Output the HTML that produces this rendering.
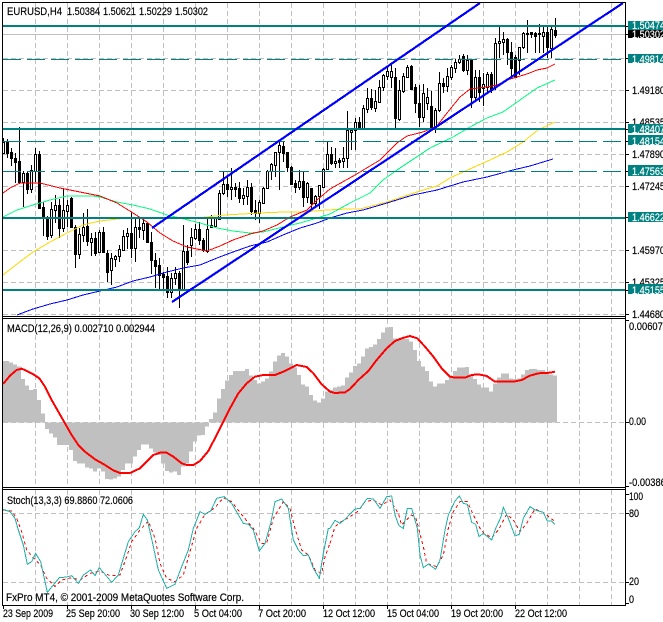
<!DOCTYPE html>
<html><head><meta charset="utf-8"><title>EURUSD,H4</title>
<style>
html,body{margin:0;padding:0;background:#fff;overflow:hidden}
svg{display:block}
text{font-family:"Liberation Sans",sans-serif;font-size:11px;fill:#000;stroke:#000;stroke-width:.18px}
text.w{fill:#fff;stroke:#fff}
</style></head><body>
<svg width="663" height="622" viewBox="0 0 663 622" xmlns="http://www.w3.org/2000/svg" shape-rendering="crispEdges">
<rect width="663" height="622" fill="#fff"/>
<!-- grid -->
<g fill="none" stroke="#c0c0c0" stroke-width="1" stroke-dasharray="5 3">
<path d="M35.5 3V316M67.5 3V316M99.5 3V316M131.5 3V316M163.5 3V316M195.5 3V316M227.5 3V316M259.5 3V316M291.5 3V316M323.5 3V316M355.5 3V316M387.5 3V316M419.5 3V316M451.5 3V316M483.5 3V316M515.5 3V316M547.5 3V316M579.5 3V316M611.5 3V316"/>
<path d="M3 58.5H625M3 90.5H625M3 122.5H625M3 154.5H625M3 186.5H625M3 250.5H625M3 282.5H625M3 314.5H625"/>
<path d="M35.5 319V487M67.5 319V487M99.5 319V487M131.5 319V487M163.5 319V487M195.5 319V487M227.5 319V487M259.5 319V487M291.5 319V487M323.5 319V487M355.5 319V487M387.5 319V487M419.5 319V487M451.5 319V487M483.5 319V487M515.5 319V487M547.5 319V487M579.5 319V487M611.5 319V487"/>
<path d="M35.5 490V605M67.5 490V605M99.5 490V605M131.5 490V605M163.5 490V605M195.5 490V605M227.5 490V605M259.5 490V605M291.5 490V605M323.5 490V605M355.5 490V605M387.5 490V605M419.5 490V605M451.5 490V605M483.5 490V605M515.5 490V605M547.5 490V605M579.5 490V605M611.5 490V605"/>
<path d="M3 513.5H625M3 582.5H625"/>
</g>
<path d="M3 34.5H625" stroke="#c0c0c0" stroke-width="1"/>
<!-- candles -->
<g transform="translate(.5 0)" fill="none">
<path stroke="#000" stroke-width="1" d="M3 138V154M7 139V158M11 148V166M15 153V183M19 127V184M23 171V207M27 171V194M31 165V193M35 148V182M39 151V208M43 202V236M47 216V240M51 202V238M55 195V223M59 199V238M63 188V232M67 200V227M71 197V228M75 225V268M79 228V259M83 213V242M87 209V246M91 233V256M95 232V256M99 230V253M103 227V253M107 250V282M111 253V285M115 255V267M119 245V262M123 230V251M127 228V249M131 212V258M135 217V262M139 218V238M143 218V240M147 222V242M151 232V274M155 253V288M159 258V291M163 272V290M167 267V298M171 273V298M175 267V285M179 271V308M183 225V290M187 245V265M191 228V257M195 224V240M199 222V245M203 238V252M207 217V253M211 215V227M215 217V226M219 190V219M223 172V195M227 175V197M231 168V200M235 183V197M239 182V203M243 188V205M247 180V205M251 183V215M255 200V220M259 200V223M263 187V203M267 170V188M271 163V180M275 152V177M279 140V190M283 142V162M287 152V172M291 166V185M295 180V193M299 170V190M303 172V207M307 182V203M311 188V209M315 195V207M319 185V209M323 168V188M327 142V170M331 147V165M335 148V168M339 158V168M343 147V168M347 111V168M351 128V150M355 118V150M359 117V130M363 105V130M367 88V113M371 89V110M375 90V112M379 80V103M383 74V91M387 67V80M391 65V88M395 68V128M399 80V121M403 73V93M407 65V78M411 65V89M415 84V113M419 85V127M423 84V122M427 88V110M431 91V128M435 108V133M439 72V112M443 78V93M447 68V92M451 65V80M455 59V73M459 55V64M463 54V72M467 55V75M471 59V108M475 70V100M479 70V102M483 73V106M487 72V93M491 72V93M495 38V90M499 26V58M503 32V55M507 38V65M511 42V78M515 55V78M519 47V75M523 32V49M527 20V53M531 32V38M535 32V53M539 24V53M543 27V53M547 25V58M551 27V58M555 18V38"/>
<path stroke="#000" stroke-width="3" d="M7 142V154M11 152V159M15 158V163M19 161V183M27 173V190M39 154V209M43 207V218M47 217V237M59 205V229M71 198V228M75 227V255M87 226V242M95 238V254M103 232V253M107 253V273M131 233V249M139 227V230M147 223V243M151 242V261M155 260V267M159 265V276M163 274V278M167 276V293M179 273V291M187 251V263M199 229V241M203 240V251M211 225V228M227 184V190M235 187V190M239 188V199M251 187V212M255 210V214M283 146V154M287 152V168M291 167V185M295 183V188M303 181V198M311 188V204M331 154V164M339 160V163M359 122V130M371 98V108M395 77V119M411 66V90M415 87V104M419 103V118M431 106V129M443 83V87M463 56V71M471 59V98M479 77V93M491 74V91M507 39V53M511 52V69M515 57V78M531 32V35M535 33V37M547 32V48M555 30V36M3 142V154M23 173V183M31 170V190M35 154V172M51 209V236M55 205V211M63 210V229M67 205V212M79 234V255M83 227V236M91 238V243M99 232V253M111 258V271M115 256V260M119 249V257M123 236V251M127 233V237M135 227V249M143 223V231M171 278V293M175 273V279M183 251V291M191 237V246M195 229V239M207 229V252M215 217V227M219 193V220M223 184V194M231 187V190M243 195V199M247 187V197M259 202V214M263 188V204M267 171V189M271 164V172M275 152V166M279 145V153M299 181V188M307 183V198M315 196V204M319 185V197M323 169V188M327 154V170M335 161V164M343 158V162M347 130V159M351 130V133M355 122V131M363 108V129M367 98V110M375 101V109M379 87V103M383 75V88M387 71V77M391 71V78M399 90V120M403 76V92M407 67V78M423 93V118M427 97V104M435 110V129M439 83V111M447 76V87M451 67V78M455 62V69M459 59V63M467 60V71M475 77V98M483 84V89M487 74V88M495 43V88M499 41V44M503 39V43M519 47V61M523 33V48M527 33V35M539 33V35M543 32V37M551 29V49"/>
<path stroke="#fff" stroke-width="1" d="M3 143V153M23 174V182M31 171V189M35 155V171M51 210V235M55 206V210M63 211V228M67 206V211M79 235V254M83 228V235M91 239V242M99 233V252M111 259V270M115 257V259M119 250V256M123 237V250M127 234V236M135 228V248M143 224V230M171 279V292M175 274V278M183 252V290M191 238V245M195 230V238M207 230V251M215 218V226M219 194V219M223 185V193M231 188V189M243 196V198M247 188V196M259 203V213M263 189V203M267 172V188M271 165V171M275 153V165M279 146V152M299 182V187M307 184V197M315 197V203M319 186V196M323 170V187M327 155V169M335 162V163M343 159V161M347 131V158M351 131V132M355 123V130M363 109V128M367 99V109M375 102V108M379 88V102M383 76V87M387 72V76M391 72V77M399 91V119M403 77V91M407 68V77M423 94V117M427 98V103M435 111V128M439 84V110M447 77V86M451 68V77M455 63V68M459 60V62M467 61V70M475 78V97M483 85V88M487 75V87M495 44V87M499 42V43M503 40V42M519 48V60M523 34V47M543 33V36M551 30V48"/>
</g>
<!-- moving averages -->
<g fill="none" stroke-width="1">
<polyline stroke="#ffd700" points="3,275 17,264 33,252 50,242 67,233 83,225 100,221 127,218 167,218 187,219 225,215 260,213 283,212 303,212 327,210 347,209 360,209 387,202 417,192 437,186 450,178 463,172 490,160 507,152 523,142 538,130 555,122"/>
<polyline stroke="#00ff7f" points="3,217 17,210 33,205 50,200 67,196 93,196 100,197 117,202 133,205 150,209 167,215 180,218 200,223 217,228 233,231 250,233 263,232 283,227 300,223 317,218 330,214 350,203 370,193 383,180 397,170 412,160 430,148 453,137 470,127 487,118 503,112 520,100 537,88 555,80"/>
<polyline stroke="#0000ff" points="17,315 33,309 50,304 67,300 83,295 100,291 117,287 133,281 150,277 167,272 183,268 200,265 217,258 233,252 250,246 267,242 283,235 300,228 317,223 330,218 347,213 363,210 387,203 413,195 437,190 463,182 487,177 513,170 530,166 553,159"/>
<polyline stroke="#ff0000" points="3,193 10,188 20,183 40,183 60,188 80,192 100,196 117,203 133,213 147,222 160,233 173,241 187,247 207,251 220,246 233,240 250,234 263,231 277,225 290,217 307,210 317,200 330,189 355,175 380,160 397,143 407,136 423,132 437,126 447,113 460,97 470,89 487,87 497,85 507,80 527,74 537,70 547,68 555,64"/>
</g>
<!-- teal levels -->
<g fill="none" stroke="#008080">
<path stroke-width="2" d="M3 26H625M3 129H625M3 218H625M3 290H625"/>
<path stroke-width="1" stroke-dasharray="18 6" d="M3 59.5H625M3 141.5H625M3 171.5H625"/>
</g>
<!-- trend lines -->
<path fill="none" stroke="#0000ff" stroke-width="2.2" d="M152 228L480 3M172 302L623 3"/>
<!-- MACD histogram -->
<g transform="translate(0 315) scale(1 .33333)">
<path fill="#c0c0c0" d="M3 322V138h2V138h4V142h4V148h4V155h4V192h4V212h4V225h4V222h4V255h4V295h4V342h4V355h4V368h4V390h4V390h4V390h4V405h4V438h4V445h4V445h4V457h4V460h4V470h4V460h4V470h4V492h4V494h4V490h4V485h4V465h4V445h4V445h4V425h4V405h4V388h4V388h4V400h4V412h4V420h4V445h4V468h4V472h4V470h4V480h4V455h4V445h4V410h4V380h4V362h4V360h4V335h4V312h4V292h4V250h4V222h4V197h4V180h4V168h4V168h4V168h4V162h4V182h4V195h4V205h4V200h4V190h4V170h4V140h4V122h4V114h4V125h4V145h4V158h4V180h4V208h4V215h4V240h4V256h4V262h4V250h4V230h4V225h4V218h4V215h4V212h4V188h4V172h4V153h4V145h4V124h4V100h4V96h4V88h4V72h4V52h4V38h4V36h4V70h4V72h4V72h4V72h4V80h4V105h4V138h4V155h4V168h4V200h4V215h4V205h4V205h4V195h4V185h4V168h4V158h4V158h4V156h4V180h4V192h4V208h4V218h4V218h4V230h4V205h4V188h4V175h4V175h4V190h4V192h4V190h4V178h4V165h4V162h4V162h4V165h4V165h4V172h4V178h4V182h4V322Z"/>
</g>
<path d="M3 422.5H625" stroke="#c0c0c0" stroke-width="1" stroke-dasharray="5 3" fill="none"/>
<!-- MACD signal -->
<g fill="none" stroke="#ff0000" stroke-width="6">
<polyline transform="translate(0 315) scale(.33333)" points="9,207 30,182 50,165 65,161 85,170 100,178 118,190 135,215 155,255 175,290 195,325 215,360 235,390 255,410 285,433 315,450 340,466 360,474 390,474 420,460 440,440 460,420 480,413 500,413 520,425 545,445 560,450 580,450 600,438 625,408 650,360 670,320 690,280 715,235 740,205 765,185 790,180 825,180 850,170 870,160 890,150 920,156 940,175 965,208 990,230"/>
<polyline transform="translate(330 315) scale(.33333)" points="0,230 15,234 45,232 60,222 85,195 115,168 140,135 170,100 195,78 215,70 240,63 262,70 285,95 310,125 335,160 360,185 375,188 405,188 425,180 445,178 470,183 495,200 520,200 550,200 575,195 600,182 625,175 660,173 675,170"/>
</g>
<!-- Stochastic -->
<g fill="none" stroke-width="3">
<g stroke="#ff0000" stroke-dasharray="9 9">
<polyline transform="translate(0 485) scale(.33333)" points="9,75 35,78 50,100 65,140 80,195 100,218 122,240 140,280 165,305 185,285 215,278 240,285 270,265 300,258 330,272 360,270 380,215 395,170 420,135 445,108 465,160 480,235 500,280 525,290 550,270 570,200 590,130 615,88 645,68 670,38 695,50 730,95 760,130 785,175 800,175 820,100 850,50 870,70 885,130 905,195 925,210 945,255 965,265 975,215 990,175"/>
<polyline transform="translate(330 485) scale(.33333)" points="0,175 15,125 30,112 60,95 85,78 105,50 130,45 155,60 180,45 205,85 215,120 245,90 258,100 280,185 290,235 320,245 340,210 355,130 370,80 390,50 412,50 430,90 450,130 462,145 485,158 505,135 530,88 550,105 570,140 590,115 615,72 640,82 675,110"/>
</g>
<g stroke="#20b2aa">
<polyline transform="translate(0 485) scale(.33333)" points="9,73 30,80 45,100 55,135 70,180 82,238 95,230 107,205 122,230 135,290 142,322 160,300 178,278 200,276 215,272 235,295 250,270 272,255 285,272 298,248 315,268 335,292 355,270 370,220 385,170 405,140 418,128 430,88 442,105 458,175 475,255 500,310 525,298 545,245 565,195 580,130 600,80 615,88 632,78 650,40 672,35 695,55 730,115 745,118 760,135 778,198 795,175 812,115 825,50 845,42 865,70 880,165 895,195 910,212 925,210 940,250 958,280 970,205 985,130 990,130"/>
<polyline transform="translate(330 485) scale(.33333)" points="0,130 15,106 30,115 45,103 75,72 90,70 112,40 130,42 150,70 170,35 185,33 195,90 207,122 220,130 232,70 245,70 262,130 270,210 280,248 295,237 317,253 330,225 345,135 355,90 375,48 388,33 400,55 412,58 425,112 437,118 447,155 460,145 485,165 497,130 512,98 520,67 535,100 555,153 568,148 580,100 600,65 615,75 640,82 652,108 665,108 675,118"/>
</g>
</g>
<!-- frames -->
<g fill="#000">
<rect x="2" y="2" width="624" height="1"/>
<rect x="2" y="2" width="1" height="604"/>
<rect x="625" y="2" width="1" height="604"/>
<rect x="2" y="316" width="624" height="1"/>
<rect x="2" y="318" width="624" height="1"/>
<rect x="2" y="487" width="624" height="1"/>
<rect x="2" y="489" width="624" height="1"/>
<rect x="2" y="605" width="624" height="1"/>
<path d="M3 605h1v4h-1zM67 605h1v4h-1zM131 605h1v4h-1zM195 605h1v4h-1zM259 605h1v4h-1zM323 605h1v4h-1zM387 605h1v4h-1zM451 605h1v4h-1zM515 605h1v4h-1z"/>
<path d="M626 26h3v1h-3zM626 34h3v1h-3zM626 58h3v1h-3zM626 90h3v1h-3zM626 122h3v1h-3zM626 129h3v1h-3zM626 141h3v1h-3zM626 154h3v1h-3zM626 171h3v1h-3zM626 186h3v1h-3zM626 217h3v1h-3zM626 250h3v1h-3zM626 282h3v1h-3zM626 290h3v1h-3zM626 314h3v1h-3zM626 320h3v1h-3zM626 422h3v1h-3zM626 486h3v1h-3zM626 494h3v1h-3zM626 513h3v1h-3zM626 582h3v1h-3zM626 603h3v1h-3z"/>
</g>
<!-- chart captions -->
<g shape-rendering="auto">
<text x="7" y="15" textLength="55" lengthAdjust="spacingAndGlyphs">EURUSD,H4</text>
<text x="67" y="15" textLength="33" lengthAdjust="spacingAndGlyphs">1.50384</text>
<text x="103" y="15" textLength="33" lengthAdjust="spacingAndGlyphs">1.50621</text>
<text x="139" y="15" textLength="33" lengthAdjust="spacingAndGlyphs">1.50229</text>
<text x="175" y="15" textLength="33" lengthAdjust="spacingAndGlyphs">1.50302</text>
<text x="7" y="332" textLength="148" lengthAdjust="spacingAndGlyphs">MACD(12,26,9) 0.002710 0.002944</text>
<text x="7" y="504" textLength="126" lengthAdjust="spacingAndGlyphs">Stoch(13,3,3) 69.8860 72.0606</text>
<text x="6" y="601" textLength="238" lengthAdjust="spacingAndGlyphs">FxPro MT4, © 2001-2009 MetaQuotes Software Corp.</text>
<!-- time axis -->
<text x="3" y="617" textLength="50" lengthAdjust="spacingAndGlyphs">23 Sep 2009</text>
<text x="66" y="617" textLength="54" lengthAdjust="spacingAndGlyphs">25 Sep 20:00</text>
<text x="130" y="617" textLength="54" lengthAdjust="spacingAndGlyphs">30 Sep 12:00</text>
<text x="194" y="617" textLength="48" lengthAdjust="spacingAndGlyphs">5 Oct 04:00</text>
<text x="258" y="617" textLength="48" lengthAdjust="spacingAndGlyphs">7 Oct 20:00</text>
<text x="323" y="617" textLength="52" lengthAdjust="spacingAndGlyphs">12 Oct 12:00</text>
<text x="387" y="617" textLength="52" lengthAdjust="spacingAndGlyphs">15 Oct 04:00</text>
<text x="451" y="617" textLength="52" lengthAdjust="spacingAndGlyphs">19 Oct 20:00</text>
<text x="515" y="617" textLength="52" lengthAdjust="spacingAndGlyphs">22 Oct 12:00</text>
<!-- price axis -->
<text x="632" y="94" textLength="33" lengthAdjust="spacingAndGlyphs">1.49180</text>
<text x="632" y="126" textLength="33" lengthAdjust="spacingAndGlyphs">1.48535</text>
<text x="632" y="158" textLength="33" lengthAdjust="spacingAndGlyphs">1.47890</text>
<text x="632" y="190" textLength="33" lengthAdjust="spacingAndGlyphs">1.47245</text>
<text x="632" y="254" textLength="33" lengthAdjust="spacingAndGlyphs">1.45970</text>
<text x="632" y="286" textLength="33" lengthAdjust="spacingAndGlyphs">1.45325</text>
<text x="632" y="318" textLength="33" lengthAdjust="spacingAndGlyphs">1.44680</text>
<rect x="628" y="30" width="35" height="8" fill="#000" shape-rendering="crispEdges"/>
<text class="w" x="632" y="38" textLength="33" lengthAdjust="spacingAndGlyphs">1.50302</text>
<g fill="#008080" shape-rendering="crispEdges">
<rect x="628" y="21" width="35" height="9"/>
<rect x="628" y="54" width="35" height="9"/>
<rect x="628" y="124" width="35" height="9"/>
<rect x="628" y="135" width="35" height="10"/>
<rect x="628" y="165" width="35" height="11"/>
<rect x="628" y="212" width="35" height="10"/>
<rect x="628" y="284" width="35" height="10"/>
</g>
<text class="w" x="632" y="29" textLength="33" lengthAdjust="spacingAndGlyphs">1.50474</text>
<text class="w" x="632" y="63" textLength="33" lengthAdjust="spacingAndGlyphs">1.49814</text>
<text class="w" x="632" y="133" textLength="33" lengthAdjust="spacingAndGlyphs">1.48407</text>
<text class="w" x="632" y="145" textLength="33" lengthAdjust="spacingAndGlyphs">1.48154</text>
<text class="w" x="632" y="175" textLength="33" lengthAdjust="spacingAndGlyphs">1.47563</text>
<text class="w" x="632" y="221" textLength="33" lengthAdjust="spacingAndGlyphs">1.46622</text>
<text class="w" x="632" y="294" textLength="33" lengthAdjust="spacingAndGlyphs">1.45155</text>
<!-- indicator axes -->
<text x="629" y="330" textLength="39" lengthAdjust="spacingAndGlyphs">0.006072</text>
<text x="629" y="425" textLength="17" lengthAdjust="spacingAndGlyphs">0.00</text>
<text x="629" y="486" textLength="42" lengthAdjust="spacingAndGlyphs">-0.003860</text>
<text x="629" y="500" textLength="14" lengthAdjust="spacingAndGlyphs">100</text>
<text x="629" y="517" textLength="10" lengthAdjust="spacingAndGlyphs">80</text>
<text x="629" y="585" textLength="10" lengthAdjust="spacingAndGlyphs">20</text>
<text x="629" y="603" textLength="5" lengthAdjust="spacingAndGlyphs">0</text>
</g>
</svg>
</body></html>
